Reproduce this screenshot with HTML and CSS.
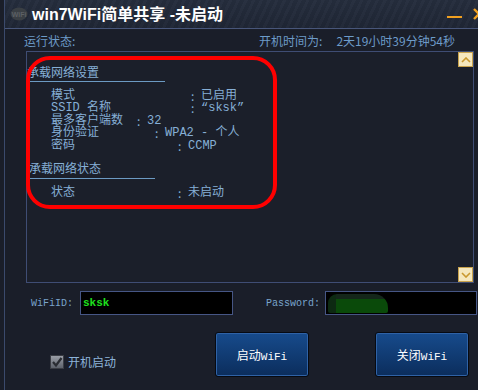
FILE: index.html
```html
<!DOCTYPE html>
<html lang="zh-CN">
<head>
  <meta charset="UTF-8" />
  <title>win7WiFi简单共享</title>
  <link rel="stylesheet" href="styles.css">
</head>
<body>
  <div class="window">

    <!-- title bar -->
    <div class="titlebar">
      <svg class="logo" width="18" height="14" viewBox="0 0 18 14">
        <ellipse cx="9" cy="7" rx="8.5" ry="6.5" fill="#3a3f44" />
        <text x="9" y="10" text-anchor="middle" font-size="7" font-weight="bold" font-family="Liberation Sans, sans-serif" fill="#5c6064">WiFi</text>
      </svg>
      <span class="title">win7WiFi简单共享 -未启动</span>
      <div class="controls">
        <span class="btn-min"></span>
        <svg class="btn-close" width="14" height="14" viewBox="0 0 14 14">
          <path d="M2 2 L12 12 M12 2 L2 12" stroke="#f0a020" stroke-width="2.4" fill="none" />
        </svg>
      </div>
    </div>

    <div class="status-row">
      <span>运行状态:</span>
      <span class="uptime">开机时间为:<span class="uptime-val">2天19小时39分钟54秒</span></span>
    </div>

    <!-- info panel -->
    <div class="panel">
      <div class="heading">承载网络设置</div>
      <div class="rows">
        <div class="row"><span class="k k-wide">模式</span><span class="colon">:</span><span>已启用</span></div>
        <div class="row"><span class="k k-wide">SSID 名称</span><span class="colon">:</span><span>“sksk”</span></div>
        <div class="row"><span class="k k-short">最多客户端数</span><span class="colon">:</span><span>32</span></div>
        <div class="row"><span class="k k-mid">身份验证</span><span class="colon">:</span><span>WPA2 - 个人</span></div>
        <div class="row"><span class="k k-pw">密码</span><span class="colon">:</span><span>CCMP</span></div>
      </div>
      <div class="heading heading-2">承载网络状态</div>
      <div class="rows">
        <div class="row"><span class="k k-pw">状态</span><span class="colon">:</span><span>未启动</span></div>
      </div>

      <div class="highlight"></div>
      <div class="scroll-btn scroll-up">
        <svg width="10" height="6" viewBox="0 0 10 6"><path d="M1 5 L5 1 L9 5" stroke="#c9982e" stroke-width="1.6" fill="none" /></svg>
      </div>
      <div class="scroll-btn scroll-down">
        <svg width="10" height="6" viewBox="0 0 10 6"><path d="M1 1 L5 5 L9 1" stroke="#c9982e" stroke-width="1.6" fill="none" /></svg>
      </div>
    </div>

    <div class="fields">
      <span class="field-label">WiFiID:</span>
      <div class="field-box"><span class="field-val">sksk</span></div>
      <span class="field-label pw-label">Password:</span>
      <div class="field-box pw-box"><span class="pw-blur"></span></div>
    </div>

    <div class="actions">
      <label class="autostart">
        <span class="check">
          <svg width="12" height="12" viewBox="0 0 12 12"><path d="M2 6 L5 9.5 L10.5 2" stroke="#2a2d33" stroke-width="2.2" fill="none" /></svg>
        </span>
        开机启动
      </label>
      <button class="act-btn">启动<span class="mono">WiFi</span></button>
      <button class="act-btn act-btn-2">关闭<span class="mono">WiFi</span></button>
    </div>

  </div>
</body>
</html>
```

FILE: styles.css
```css
* {
  box-sizing: border-box;
}

body {
  margin: 0;
  width: 478px;
  height: 390px;
  overflow: hidden;
  background: #1a1e29;
  font-family: "Noto Sans CJK SC", sans-serif;
  font-size: 12px;
  color: #7aa6cf;
}

.window {
  margin-left: 4px;
  border-left: 1px solid #3b4a6c;
  height: 390px;
}

/* title bar */
.titlebar {
  height: 29px;
  display: flex;
  align-items: center;
  border-bottom: 1px solid #48567a;
  background:
    repeating-linear-gradient(115deg, rgba(255,255,255,0.02) 0 3px, rgba(0,0,0,0.03) 3px 7px),
    linear-gradient(#252d3d, #1f2635);
}

.logo {
  margin-left: 5px;
  margin-right: 4px;
}

.title {
  font-family: "Liberation Sans", "Noto Sans CJK SC", sans-serif;
  font-weight: bold;
  font-size: 16px;
  color: #fff;
  line-height: 16px;
  margin-top: 1px;
}

.controls {
  margin-left: auto;
  display: flex;
  align-items: center;
  margin-right: -8px;
}

.btn-min {
  width: 15px;
  height: 2px;
  background: #f0a020;
  margin-top: 6px;
  margin-right: 10px;
}

/* status */
.status-row {
  display: flex;
  justify-content: space-between;
  padding: 5px 23px 0 19px;
  height: 22px;
  line-height: 14px;
  color: #6d9bc8;
}

.uptime-val {
  margin-left: 14px;
}

/* panel */
.panel {
  position: relative;
  margin-left: 21px;
  width: 448px;
  height: 232px;
  border: 1px solid #3f4d74;
  background: #1b1f2a;
  padding-top: 13px;
  color: #86afd6;
}

.heading {
  width: 138px;
  line-height: 14px;
  padding-bottom: 2px;
  border-bottom: 1px solid #6c9ac3;
}

.heading-2 {
  width: 126px;
  margin-top: 9px;
  margin-left: 2px;
  padding-bottom: 3px;
}

.rows {
  padding: 8px 0 0 24px;
}

.row {
  display: flex;
  line-height: 12.4px;
  height: 12.4px;
}

.k {
  font-family: "Liberation Mono", "Noto Sans CJK SC", monospace;
}

.k-wide { width: 140px; }
.k-short { width: 86px; }
.k-mid { width: 104px; }
.k-pw { width: 127px; }

.colon {
  width: 10px;
}

.row span:last-child {
  font-family: "Liberation Mono", "Noto Sans CJK SC", monospace;
}

.highlight {
  position: absolute;
  left: -1px;
  top: 4px;
  width: 251px;
  height: 153px;
  border: 4px solid #ff0000;
  border-radius: 24px;
}

.scroll-btn {
  position: absolute;
  right: 0;
  width: 15px;
  height: 15px;
  background: #f5e7bd;
  border: 1px solid #c8a24c;
  display: flex;
  align-items: center;
  justify-content: center;
}

.scroll-up { top: 0; }
.scroll-down { bottom: 0; }

/* fields */
.fields {
  display: flex;
  align-items: center;
  margin-top: 8px;
  padding-left: 26px;
  height: 24px;
}

.field-label {
  font-family: "Liberation Mono", monospace;
  font-size: 10px;
  color: #79a4cc;
  margin-right: 7px;
}

.pw-label {
  margin-left: 33px;
  margin-right: 5px;
}

.field-box {
  width: 153px;
  height: 24px;
  border: 1px solid #465685;
  background: #000;
  display: flex;
  align-items: center;
  padding-left: 2px;
}

.pw-box {
  width: 152px;
}

.field-val {
  font-family: "Liberation Mono", monospace;
  font-weight: bold;
  font-size: 11px;
  color: #1ee01e;
}

.pw-blur {
  width: 60px;
  height: 19px;
  border-radius: 9px 14px 2px 2px;
  background:
    linear-gradient(90deg, #0d2a12 0 8px, transparent 8px),
    linear-gradient(#14261a 0 5px, #0a4a0a 5px);
}

/* actions */
.actions {
  display: flex;
  align-items: flex-start;
  margin-top: 17px;
  padding-left: 45px;
}

.autostart {
  width: 165px;
  margin-top: 21px;
  display: flex;
  align-items: center;
  gap: 4px;
  font-size: 12px;
  color: #8db4da;
}

.check {
  width: 14px;
  height: 14px;
  background: linear-gradient(#9a9ea6, #5d626b);
  border: 1px solid #3a3d44;
  display: flex;
  align-items: center;
  justify-content: center;
}

.act-btn {
  width: 94px;
  height: 45px;
  border: 1px solid #060a12;
  border-radius: 3px;
  box-shadow: inset 0 0 0 1px #2f62a6;
  background: linear-gradient(#174b8c, #0b2d5c);
  color: #fff;
  font-family: "Noto Sans CJK SC", sans-serif;
  font-size: 12px;
  padding: 0;
}

.act-btn-2 {
  margin-left: 66px;
}

.mono {
  font-family: "Liberation Mono", monospace;
  font-size: 11px;
}
```
